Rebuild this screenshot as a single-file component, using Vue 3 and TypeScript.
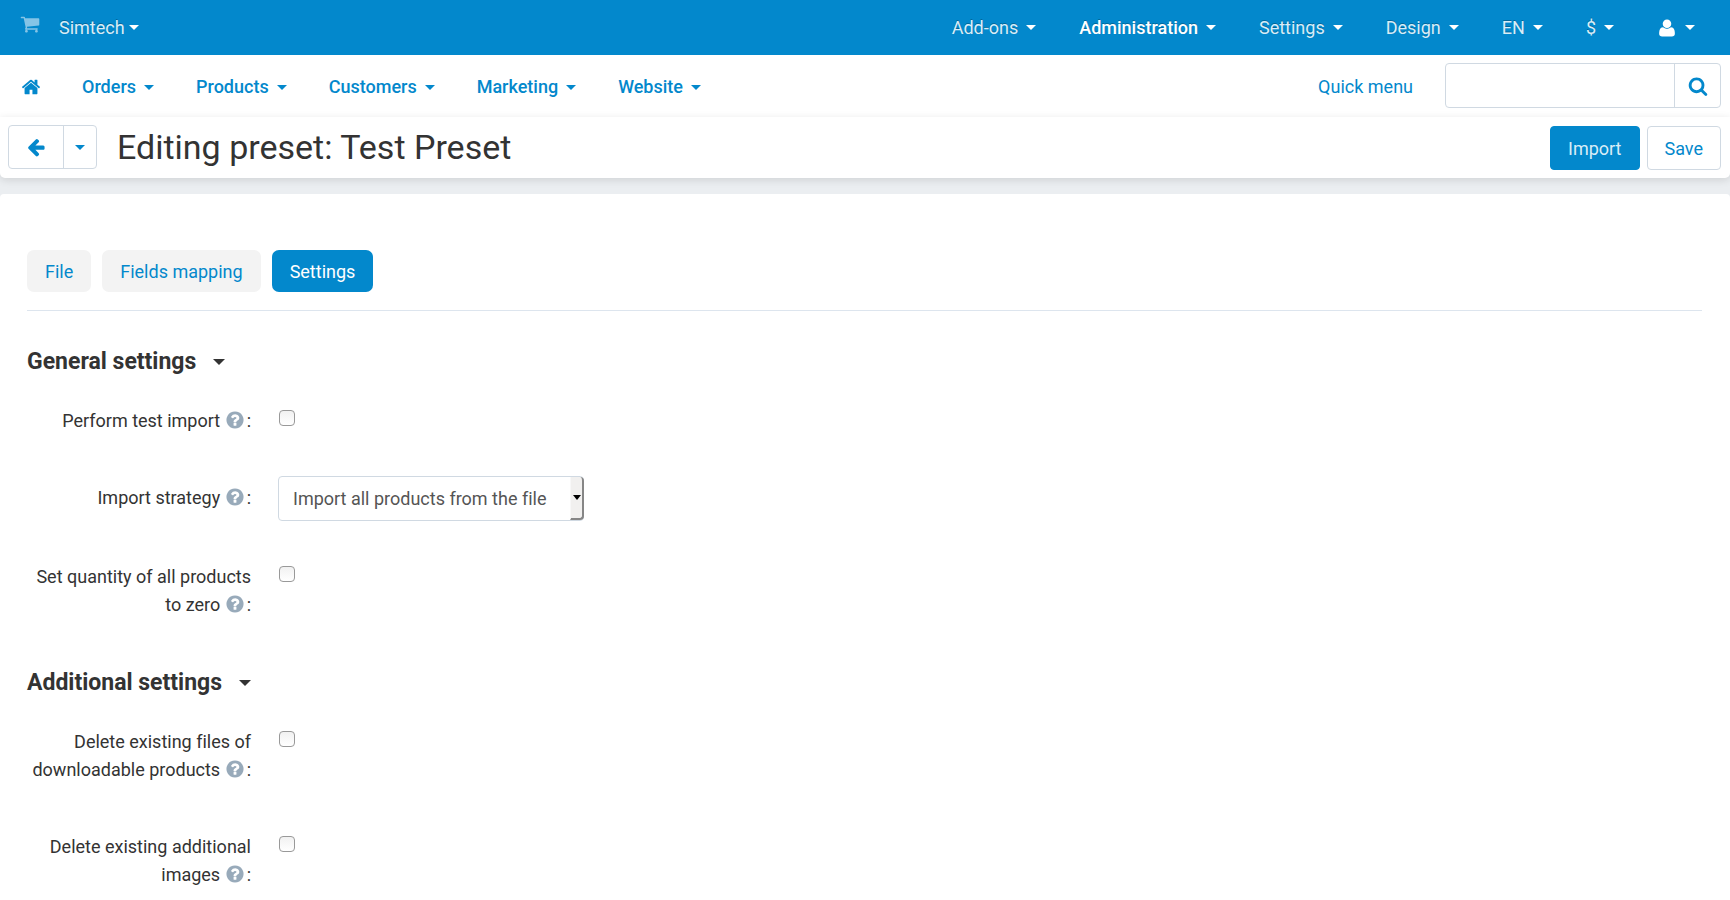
<script setup lang="ts">
import { ref } from 'vue'

interface MenuItem {
  label: string
  active?: boolean
}

interface Field {
  id: string
  label: string
  type: 'checkbox' | 'select'
  checked?: boolean
}

interface Section {
  title: string
  fields: Field[]
}

const icons = {
  cart: 'M704 1536q0 52-38 90t-90 38-90-38-38-90 38-90 90-38 90 38 38 90zm896 0q0 52-38 90t-90 38-90-38-38-90 38-90 90-38 90 38 38 90zm128-1088v512q0 24-16.5 42.5t-40.5 21.5l-1044 122q13 60 13 70 0 16-24 64h920q26 0 45 19t19 45-19 45-45 19h-1024q-26 0-45-19t-19-45q0-11 8-31.5t16-36 21.5-40 15.5-29.5l-177-823h-204q-26 0-45-19t-19-45 19-45 45-19h256q16 0 28.5 6.5t19.5 15.5 13 24.5 8 26 5.5 29.5 4.5 26h1201q26 0 45 19t19 45z',
  home: 'M1472 992v480q0 26-19 45t-45 19h-384v-384h-256v384h-384q-26 0-45-19t-19-45v-480q0-1 .5-3t.5-3l575-474 575 474q1 2 1 6zm223-69l-62 74q-8 9-21 11h-3q-13 0-21-7l-692-577-692 577q-12 8-24 7-13-2-21-11l-62-74q-8-10-7-23.5t11-21.5l719-599q32-26 76-26t76 26l244 204v-195q0-14 9-23t23-9h192q14 0 23 9t9 23v408l219 182q10 8 11 21.5t-7 23.5z',
  back: 'M1664 896v128q0 53-32.5 90.5t-84.5 37.5h-704l293 294q38 36 38 90t-38 90l-75 76q-37 37-90 37-52 0-91-37l-651-652q-37-37-37-90 0-52 37-91l651-650q38-38 91-38 52 0 90 38l75 74q38 38 38 91t-38 91l-293 293h704q52 0 84.5 37.5t32.5 90.5z',
  search: 'M1216 832q0-185-131.5-316.5t-316.5-131.5-316.5 131.5-131.5 316.5 131.5 316.5 316.5 131.5 316.5-131.5 131.5-316.5zm512 832q0 52-38 90t-90 38q-54 0-90-38l-343-342q-179 124-399 124-143 0-273.5-55.5t-225-150-150-225-55.5-273.5 55.5-273.5 150-225 225-150 273.5-55.5 273.5 55.5 225 150 150 225 55.5 273.5q0 220-124 399l343 343q37 37 37 90z',
  help: 'M1024 1376v-192q0-14-9-23t-23-9h-192q-14 0-23 9t-9 23v192q0 14 9 23t23 9h192q14 0 23-9t9-23zm256-672q0-88-55.5-163t-138.5-116-170-41q-243 0-371 213-15 24 8 42l132 100q7 6 19 6 16 0 25-12 53-68 86-92 34-24 86-24 48 0 85.5 26t37.5 59q0 38-20 61t-68 45q-63 28-115.5 86.5t-52.5 125.5v36q0 14 9 23t23 9h192q14 0 23-9t9-23q0-19 21.5-49.5t54.5-49.5q32-18 49-28.5t46-35 44.5-48 28-60.5 12.5-81zm384 192q0 209-103 385.5t-279.5 279.5-385.5 103-385.5-103-279.5-279.5-103-385.5 103-385.5 279.5-279.5 385.5-103 385.5 103 279.5 279.5 103 385.5z',
  user: 'M1600 1405q0 120-73 189.5t-194 69.5h-874q-121 0-194-69.5t-73-189.5q0-53 3.5-103.5t14-109 26.5-108.5 43-97.5 62-81 85.5-53.5 111.5-20q9 0 42 21.5t74.5 48 108 48 133.5 21.5 133.5-21.5 108-48 74.5-48 42-21.5q61 0 111.5 20t85.5 53.5 62 81 43 97.5 26.5 108.5 14 109 3.5 103.5zm-320-893q0 159-112.5 271.5t-271.5 112.5-271.5-112.5-112.5-271.5 112.5-271.5 271.5-112.5 271.5 112.5 112.5 271.5z',
}

const topMenu: MenuItem[] = [
  { label: 'Add-ons' },
  { label: 'Administration', active: true },
  { label: 'Settings' },
  { label: 'Design' },
  { label: 'EN' },
  { label: '$' },
]

const mainMenu = ['Orders', 'Products', 'Customers', 'Marketing', 'Website']

const tabs = ['File', 'Fields mapping', 'Settings']
const activeTab = ref('Settings')

const query = ref('')
const strategy = ref('all')

const sections = ref<Section[]>([
  {
    title: 'General settings',
    fields: [
      { id: 'test-import', label: 'Perform test import', type: 'checkbox', checked: false },
      { id: 'strategy', label: 'Import strategy', type: 'select' },
      { id: 'reset-quantity', label: 'Set quantity of all products to zero', type: 'checkbox', checked: false },
    ],
  },
  {
    title: 'Additional settings',
    fields: [
      { id: 'delete-files', label: 'Delete existing files of downloadable products', type: 'checkbox', checked: false },
      { id: 'delete-images', label: 'Delete existing additional images', type: 'checkbox', checked: false },
    ],
  },
])
</script>

<template>
  <div class="page">
    <header class="topbar">
      <a class="store-icon" href="#" aria-label="Storefront">
        <svg class="icon" viewBox="0 0 1792 1792"><path :d="icons.cart" /></svg>
      </a>
      <a class="store" href="#">Simtech<i class="caret" /></a>
      <nav class="top-menu">
        <a v-for="item in topMenu" :key="item.label" href="#" :class="{ active: item.active }">
          {{ item.label }}<i class="caret" />
        </a>
        <a href="#" aria-label="Account">
          <svg class="icon" viewBox="0 0 1792 1792"><path :d="icons.user" /></svg><i class="caret" />
        </a>
      </nav>
    </header>

    <div class="navbar">
      <a class="home" href="#" aria-label="Home">
        <svg class="icon" viewBox="0 0 1792 1792"><path :d="icons.home" /></svg>
      </a>
      <nav class="main-menu">
        <a v-for="label in mainMenu" :key="label" href="#">{{ label }}<i class="caret" /></a>
      </nav>
      <a class="quick" href="#">Quick menu</a>
      <form class="search" @submit.prevent>
        <input v-model="query" type="text" aria-label="Search" />
        <button type="submit" aria-label="Search">
          <svg class="icon" viewBox="0 0 1792 1792"><path :d="icons.search" /></svg>
        </button>
      </form>
    </div>

    <div class="titlebar">
      <div class="back-group">
        <button class="back" type="button" aria-label="Back">
          <svg class="icon" viewBox="0 0 1792 1792"><path :d="icons.back" /></svg>
        </button>
        <button class="back-more" type="button" aria-label="Recent pages"><i class="caret" /></button>
      </div>
      <h1>Editing preset: Test Preset</h1>
      <div class="actions">
        <button class="btn primary" type="button">Import</button>
        <button class="btn" type="button">Save</button>
      </div>
    </div>

    <main class="content">
      <div class="tabs">
        <button
          v-for="tab in tabs"
          :key="tab"
          type="button"
          :class="{ active: tab === activeTab }"
          @click="activeTab = tab"
        >
          {{ tab }}
        </button>
      </div>

      <section v-for="section in sections" :key="section.title">
        <h2>{{ section.title }}<i class="caret" /></h2>
        <div v-for="field in section.fields" :key="field.id" class="row">
          <label :for="field.id">{{ field.label }} <span class="tail"><svg class="icon help" viewBox="0 0 1792 1792"><path :d="icons.help" /></svg>:</span></label>
          <div v-if="field.type === 'select'" class="select">
            <select :id="field.id" v-model="strategy">
              <option value="all">Import all products from the file</option>
            </select>
            <span class="arrow"><i class="caret" /></span>
          </div>
          <input v-else :id="field.id" v-model="field.checked" type="checkbox" />
        </div>
      </section>
    </main>
  </div>
</template>

<style>
body {
  background: #ebeef1;
}
</style>

<style scoped>
.page {
  min-height: 100vh;
  display: flex;
  flex-direction: column;
  font-family: Roboto, 'Liberation Sans', sans-serif;
  font-size: 18px;
  line-height: 28px;
  font-variant-ligatures: none;
  color: #333;
}

.page,
.page * {
  box-sizing: border-box;
}

a {
  color: #0388cc;
  text-decoration: none;
  display: flex;
  align-items: center;
}

button,
input,
select {
  font: inherit;
  font-variant-ligatures: none;
  margin: 0;
}

button {
  cursor: pointer;
}

.icon {
  width: 20px;
  height: 20px;
  fill: currentColor;
  flex: none;
}

.caret {
  width: 0;
  height: 0;
  border: 5px solid transparent;
  border-top-color: currentColor;
  border-bottom: 0;
  margin-left: 8px;
  flex: none;
}

.topbar {
  height: 55px;
  display: flex;
  align-items: center;
  padding: 0 35px 0 20px;
  background: #0388cc;
}

.topbar a {
  color: #d9edf7;
  text-shadow: 0 -1px 0 rgba(0, 0, 0, 0.25);
}

.topbar .caret {
  color: #fff;
}

.topbar .store-icon {
  color: #85c4e6;
  padding-bottom: 8px;
}

.store {
  margin-left: 19px;
}

.store .caret {
  margin-left: 4px;
}

.top-menu {
  display: flex;
  gap: 43px;
  margin-left: auto;
}

.topbar .active {
  color: #fff;
  font-weight: 500;
}

.top-menu .icon {
  color: #fff;
}

.navbar {
  height: 62px;
  display: flex;
  align-items: center;
  padding: 2px 9px 0 21px;
  background: #fff;
}

.main-menu {
  display: flex;
  gap: 42px;
  margin-left: 41px;
  font-weight: 500;
}

.quick {
  margin-left: auto;
}

.search {
  display: flex;
  width: 276px;
  height: 45px;
  margin: 0 0 3px 32px;
  border: 1px solid #d0d9e2;
  border-radius: 4px;
}

.search input {
  flex: 1;
  min-width: 0;
  border: 0;
  padding: 0 12px;
  background: none;
  outline: none;
}

.search button {
  width: 46px;
  border: 0;
  border-left: 1px solid #d0d9e2;
  background: none;
  color: #0388cc;
  padding: 0;
  display: flex;
  align-items: center;
  justify-content: center;
}

.titlebar {
  display: flex;
  align-items: flex-start;
  padding: 8px 9px 8px 8px;
  background: #fff;
  border-radius: 0 0 5px 5px;
  box-shadow: 0 2px 8px rgba(0, 0, 0, 0.12);
}

.back-group {
  display: flex;
  height: 44px;
  border: 1px solid #d0d9e2;
  border-radius: 4px;
}

.back-group button {
  border: 0;
  background: none;
  color: #0388cc;
  padding: 0;
  display: flex;
  align-items: center;
  justify-content: center;
}

.back {
  width: 54px;
}

.back-group .back-more {
  width: 33px;
  border-left: 1px solid #d0d9e2;
}

.back-more .caret {
  margin: 0;
}

h1 {
  flex: 1;
  margin: 0 0 0 20px;
  font-size: 34px;
  line-height: 44px;
  font-weight: 400;
}

.actions {
  display: flex;
  gap: 7px;
  padding-top: 1px;
}

.btn {
  height: 44px;
  padding: 1px 17px 0;
  border: 1px solid #d0d9e2;
  border-radius: 4px;
  background: #fff;
  color: #0388cc;
}

.btn.primary {
  border-color: #0388cc;
  background: #0388cc;
  color: #d9edf7;
}

.content {
  flex: 1;
  margin-top: 16px;
  padding: 56px 28px 0 27px;
  background: #fff;
  border-radius: 4px 4px 0 0;
}

.tabs {
  display: flex;
  gap: 11px;
  padding-bottom: 18px;
  border-bottom: 1px solid #dde5ee;
  margin-bottom: 37px;
}

.tabs button {
  height: 42px;
  padding: 2px 18px 0;
  border: 0;
  border-radius: 7px;
  background: #f3f3f3;
  color: #0388cc;
}

.tabs .active {
  background: #0388cc;
  color: #fff;
}

h2 {
  display: flex;
  align-items: center;
  margin: 0 0 23px;
  font-size: 23px;
  line-height: 28px;
  font-weight: 700;
}

h2 .caret {
  border-width: 6px 6px 0;
  margin-left: 17px;
}

section + section {
  margin-top: 43px;
}

.row {
  display: flex;
  align-items: flex-start;
}

.row + .row {
  margin-top: 34px;
}

.row label {
  width: 224px;
  padding: 8px 0 7px;
  margin-right: 27px;
  text-align: right;
}

.tail {
  white-space: nowrap;
}

.help {
  color: #98aaba;
  vertical-align: -3px;
  margin-right: 2px;
}

.row input {
  appearance: none;
  width: 16px;
  height: 16px;
  margin: 11px 0 0 1px;
  border: 1px solid #999;
  border-radius: 4px;
  background: linear-gradient(#f1f1f1, #fff);
}

.row input:checked {
  background: #0388cc;
}

.select {
  position: relative;
}

select {
  appearance: none;
  display: block;
  width: 306px;
  height: 45px;
  padding: 0 32px 0 14px;
  border: 1px solid #d0d9e2;
  border-radius: 4px;
  background: #fff;
  color: #555;
}

.arrow {
  position: absolute;
  top: 1px;
  right: 0;
  bottom: 1px;
  width: 14px;
  display: flex;
  align-items: center;
  justify-content: center;
  background: #f1f0ef;
  border-left: 1px solid #f8f8f8;
  border-right: 2px solid #868686;
  border-bottom: 2px solid #868686;
  border-radius: 0 4px 4px 0;
  color: #000;
  pointer-events: none;
}

.arrow .caret {
  margin: 0;
  border-width: 5px 4px 0;
}
</style>
